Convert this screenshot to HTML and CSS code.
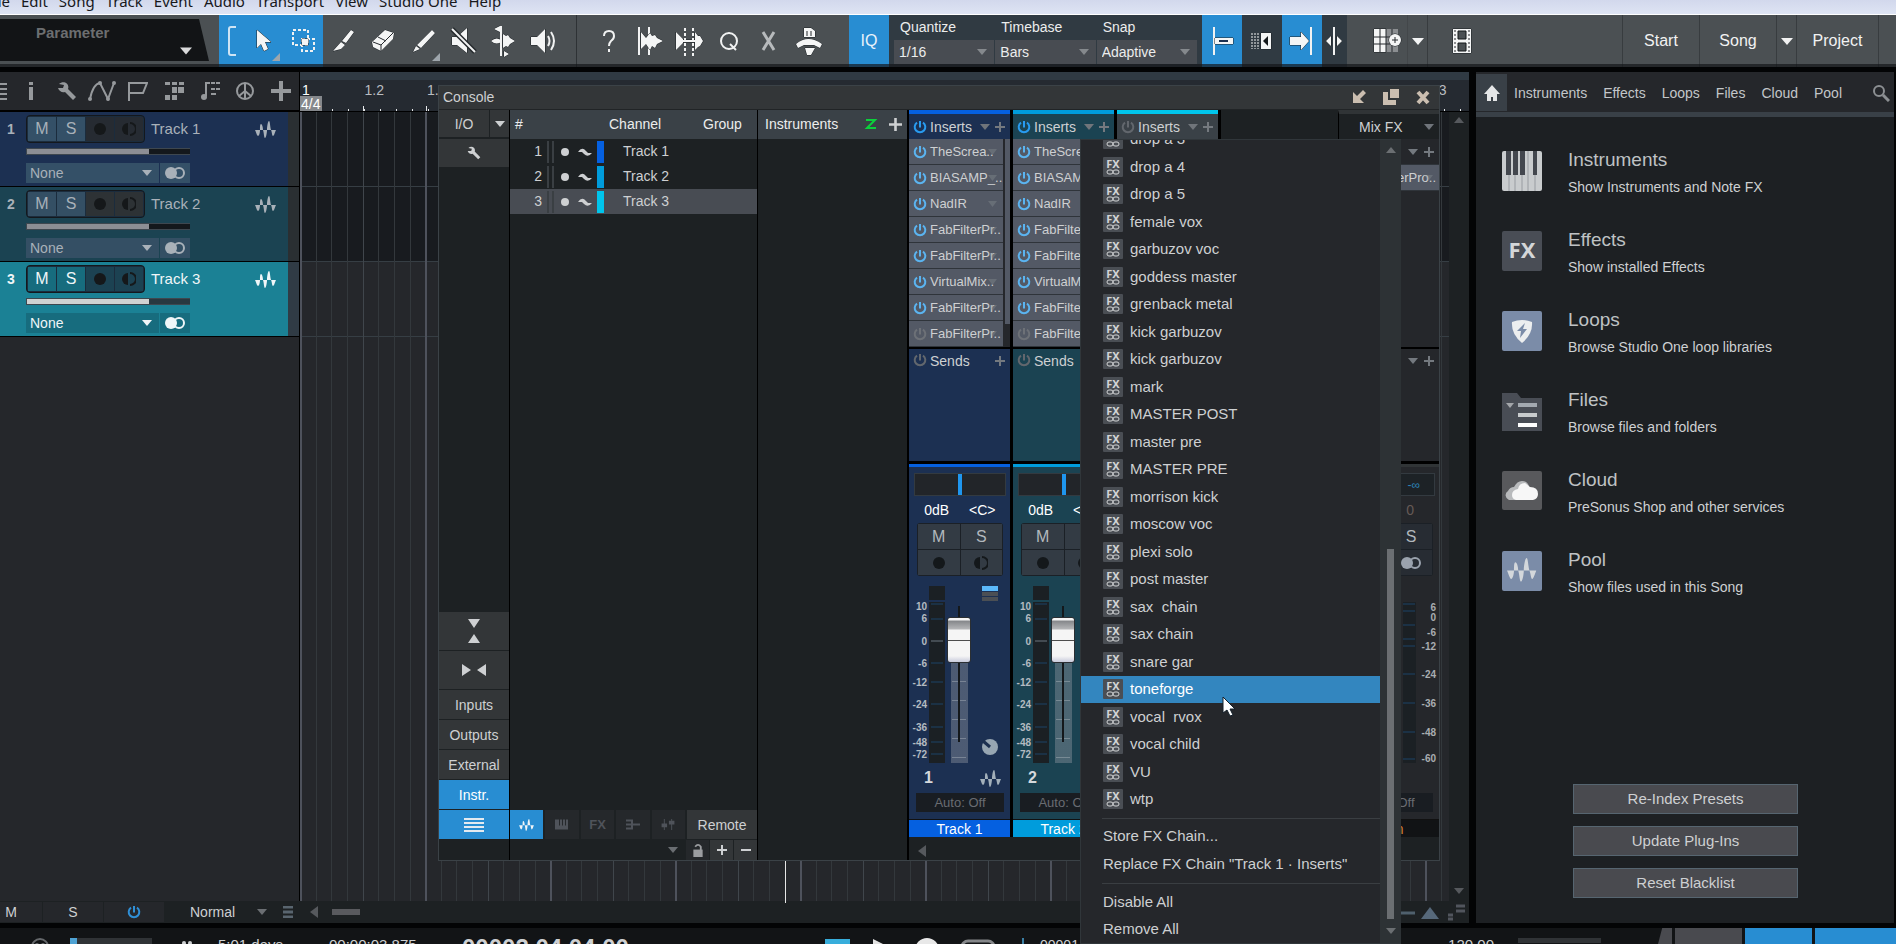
FILE: index.html
```html
<!DOCTYPE html>
<html lang="en">
  <head>
    <meta charset="UTF-8" />
    <meta name="viewport" content="width=device-width, initial-scale=1.0" />
    <title>Studio One</title>
    <link rel="stylesheet" href="styles.css">
  </head>
  <body>
    <!-- shared icons -->
    <svg class="sprite" aria-hidden="true">
      <symbol id="power" viewBox="0 0 14 14">
        <path d="M4 2.6a5.3 5.3 0 1 0 6 0M7 1v6.5" fill="none" stroke="currentColor" stroke-width="2" />
      </symbol>
      <symbol id="caret" viewBox="0 0 10 6"><path d="M0 0h10L5 6z" fill="currentColor" /></symbol>
      <symbol id="plus" viewBox="0 0 10 10"><path d="M5 0v10M0 5h10" stroke="currentColor" stroke-width="2" /></symbol>
      <symbol id="wave" viewBox="0 0 21 17">
        <path d="M0 9h21C20 11 19 15 18 15S17 11 16 9C15 5 15 0 14 0S12 5 12 9c0 3-1 8-2 8S9 12 8 9C8 6 7 3 6 3S5 6 5 9c0 3-1 6-2 6S1 11 0 9z" fill="currentColor" />
      </symbol>
      <symbol id="wrench" viewBox="0 0 20 20">
        <path d="M2 3c4-4 11-1 9 5l8 8-3 3-8-8c-3 1-6-1-7-4h5l1-3z" fill="currentColor" />
      </symbol>
      <symbol id="stereo" viewBox="0 0 20 12">
        <circle cx="6" cy="6" r="6" fill="currentColor" />
        <circle cx="14" cy="6" r="5" fill="none" stroke="currentColor" stroke-width="2" />
      </symbol>
      <symbol id="dot" viewBox="0 0 14 14"><circle cx="7" cy="7" r="6" fill="currentColor" /></symbol>
      <symbol id="half" viewBox="0 0 14 14">
        <path d="M6 1a6 6 0 0 0 0 12z" fill="currentColor" />
        <path d="M8 1a6 6 0 0 1 0 12" fill="none" stroke="currentColor" stroke-width="2" />
      </symbol>
      <symbol id="fx" viewBox="0 0 20 20">
        <rect width="20" height="20" rx="1" fill="#4a4e54" />
        <text x="10" y="11" text-anchor="middle" font-size="11" font-weight="bold" font-family="Noto Sans, sans-serif" fill="#d2d4d5">FX</text>
        <rect x="4" y="13" width="6" height="4" rx="2" fill="none" stroke="#d2d4d5" />
        <rect x="10" y="13" width="6" height="4" rx="2" fill="none" stroke="#d2d4d5" />
      </symbol>
      <symbol id="scale" viewBox="0 0 36 177">
        <path d="M20 0h16v14H20zM20 16h16v161H20z" fill="#1b2024" />
        <path d="M22 18h12M22 33h12M22 77h12M22 96h12M22 118h12M22 141h12M22 156h12M22 168h12" stroke="#1d4267" />
        <path d="M22 55h12" stroke="#6d7680" />
        <g fill="#b4bbc1" font-size="10" font-weight="bold" text-anchor="end" font-family="Liberation Sans, sans-serif">
          <text x="18" y="24">10</text><text x="18" y="36">6</text><text x="18" y="59">0</text>
          <text x="18" y="81">-6</text><text x="18" y="100">-12</text><text x="18" y="122">-24</text>
          <text x="18" y="145">-36</text><text x="18" y="160">-48</text><text x="18" y="172">-72</text>
        </g>
      </symbol>
      <symbol id="layers" viewBox="0 0 16 16">
        <path d="M0 0h16v5H0z" fill="#5bb8fa" />
        <path d="M0 6h16v4H0zM0 11h16v4H0z" fill="#4b4f54" />
      </symbol>
      <symbol id="knob" viewBox="0 0 18 18">
        <circle cx="9" cy="9" r="8" fill="#97a6b2" />
        <path d="M2 3l7 6" stroke="#1c3050" stroke-width="3" />
      </symbol>
      <symbol id="marks" viewBox="0 0 60 22">
        <path d="M2 0v22M7 0v22" stroke="#3a3f43" stroke-width="2" />
        <circle cx="19" cy="11" r="4" />
        <path d="M32 11q4-6 8-1l2 2h4q-4 5-8 1l-2-2z" />
      </symbol>
    </svg>

    <nav class="menubar">
      <a href="#">File</a><a href="#">Edit</a><a href="#">Song</a><a href="#">Track</a><a href="#">Event</a><a href="#">Audio</a><a href="#">Transport</a><a href="#">View</a><a href="#">Studio One</a><a href="#">Help</a>
    </nav>

    <header class="toolbar">
      <div class="parameter">Parameter<svg class="caret"><use href="#caret" /></svg></div>
      <div class="tools on">
        <svg class="bracket" viewBox="0 0 10 30"><path d="M9 1H4q-2 0-2 2v24q0 2 2 2h5" /></svg>
        <button aria-label="Arrow tool"><svg viewBox="0 0 30 30"><path d="M9 4v18l4-4 3 7 4-2-3-7h6z" class="fill" /></svg><i></i></button>
        <button aria-label="Range tool"><svg viewBox="0 0 30 30"><path d="M5 4h15v15H5zM14 13h12v12H14z" class="dash" /><path d="M14 13h6v6h-6z" class="fill" /></svg></button>
      </div>
      <div class="tools">
        <button aria-label="Split tool"><svg viewBox="0 0 30 30"><path d="M23 4l3 2-8 11-4-2zM13 16l4 3-4 4-8 2z" class="fill" /></svg></button>
        <button aria-label="Eraser tool"><svg viewBox="0 0 30 30"><path d="M17 4l9 3-1 6-12 12-8-4-1-5z" class="fill" /><path d="M5 16l8 3 12-12M13 19v6M10 11l8 4" class="cut" /></svg></button>
        <button aria-label="Paint tool"><svg viewBox="0 0 30 30"><path d="M24 4l3 3-14 15-4-3zM8 20l4 3-7 3z" class="fill" /></svg><i></i></button>
        <button aria-label="Mute tool"><svg viewBox="0 0 30 30"><path d="M4 11h5l10-9v25L9 19H4z" class="fill" /><path d="M4 3l23 23" class="cut wide" /><path d="M4 3l23 23" class="line" /></svg></button>
        <button aria-label="Bend tool"><svg viewBox="0 0 30 30"><path d="M3 15q6-5 11 0q-5 5-11 0zM15 8l3 2 2-1 2 3 5 3-5 3-2 3-2-1-3 2zM12 0v6l-6-3zM16 25v6l5-3z" class="fill" /><path d="M13 0v30" class="line" /></svg></button>
        <button aria-label="Listen tool"><svg viewBox="0 0 30 30"><path d="M3 11h6l8-8v24l-8-8H3z" class="fill" /><path d="M20 10q3 5 0 10M23 6q6 9 0 18" class="line" /></svg></button>
      </div>
      <div class="tools actions">
        <button aria-label="Help"><svg viewBox="0 0 30 30"><path d="M10 10q0-5 5-5t5 5q0 3-3 5-2 2-2 5M15 23v3" class="line" /></svg></button>
        <button aria-label="Strip silence"><svg viewBox="0 0 30 30"><path d="M5 1v28M15 1v28" class="line" /><path d="M7 6l5 6 4-5 2 3 3-1 2 3 6 3-6 3-2 4-3-2-2 4-4-6-5 5z" class="fill" /></svg></button>
        <button aria-label="Split at grid"><svg viewBox="0 0 30 30"><path d="M2 6l7 7v4l-7 7zM21 6l3 4 2 0 3 5-3 5-2 1-3 3zM9 14h12v2H9z" class="fill" /><path d="M11 2v28M19 2v28" class="dash" /></svg></button>
        <button aria-label="Quantize"><svg viewBox="0 0 30 30"><circle cx="15" cy="15" r="8" class="line" /><path d="M16 18l6 6" class="line" /></svg></button>
        <button aria-label="Crossfade"><svg viewBox="0 0 30 30"><path d="M9 6l11 18M20 6L9 24" class="line dim" /></svg></button>
        <button aria-label="Audio bend"><svg viewBox="0 0 30 30"><path d="M10 2h7l4 3v6H10zM2 18q12-10 26 0l-2 4-6-3H10l-6 3zM11 22h10l-4 7h-4z" class="fill" /><path d="M13 5v5M17 5v5" class="cut" /></svg></button>
      </div>
      <button class="iq">IQ</button>
      <div class="grid-options">
        <label>Quantize<span class="pick"><select><option>1/16</option></select><svg><use href="#caret" /></svg></span></label>
        <label>Timebase<span class="pick"><select><option>Bars</option></select><svg><use href="#caret" /></svg></span></label>
        <label>Snap<span class="pick"><select><option>Adaptive</option></select><svg><use href="#caret" /></svg></span></label>
      </div>
      <button class="mode on" aria-label="Snap to grid"><svg viewBox="0 0 30 30"><path d="M7 1v28" class="line" /><path d="M8 12h18v6H8z" class="fill" /><path d="M12 15h9" stroke="#1c3050" stroke-width="2" /></svg></button>
      <button class="mode" aria-label="Autoscroll"><svg viewBox="0 0 30 30"><path d="M5 7v16M8 7v16M11 7v16" class="dots" /><path d="M14 7h10v16H14z" class="fill" /><path d="M21 10v10l-5-5z" fill="#14181b" /></svg></button>
      <button class="mode on" aria-label="Follow song"><svg viewBox="0 0 30 30"><path d="M3 11h11V6l8 9-8 9v-5H3z" class="fill" /><path d="M24 1v28" class="line" /></svg></button>
      <button class="mode slim" aria-label="Cursor follows"><svg viewBox="0 0 30 30"><path d="M14 1v28" class="line" /><path d="M11 10v10l-5-5zM17 10v10l5-5z" class="fill" /></svg></button>
      <div class="tools end">
        <button class="grid-btn" aria-label="Macro grid"><svg viewBox="0 0 30 30"><path d="M3 3h12v23H3z" class="fill" /><path d="M15 3h12v23H15z" fill="#8b8e91" /><path d="M9 3v23M15 3v23M21 3v23M3 11h24M3 18h24" class="cut" /><circle cx="24" cy="14" r="6" class="fill" /><path d="M24 11v6M21 14h6" class="cut" /></svg></button>
        <button class="drop" aria-label="Grid options"><svg class="caret"><use href="#caret" /></svg></button>
        <button class="film" aria-label="Video"><svg viewBox="0 0 30 30"><path d="M6 3h18v24H6z" class="fill" /><path d="M11 5h8v8h-8zM11 17h8v8h-8z" fill="#4b5053" stroke="#15181a" /><path d="M8 4v22M22 4v22" stroke="#25272b" stroke-dasharray="2 2" /></svg></button>
      </div>
      <nav class="pages">
        <a href="#">Start</a><a href="#">Song</a><a href="#" class="drop" aria-label="Open songs"><svg class="caret"><use href="#caret" /></svg></a><a href="#" class="project">Project</a><span></span>
      </nav>
    </header>

    <main class="workspace">
      <section class="arrange">
        <div class="arrange-main">
          <div class="track-panel">
            <div class="track-tools">
              <button class="cropped" aria-label="Track list"><svg viewBox="0 0 20 20"><path d="M0 3h14M0 8h14M0 13h14M0 18h14" class="mono" /></svg></button>
              <button aria-label="Inspector"><svg viewBox="0 0 20 20"><path d="M8 1h4v3H8zM8 6h4v13H8z" fill="currentColor" /></svg></button>
              <button aria-label="Track settings"><svg><use href="#wrench" /></svg></button>
              <button aria-label="Automation"><svg class="big" viewBox="0 0 28 20"><path d="M2 18Q5 3 12 2l8 16 6-16" class="mono" /><circle cx="2" cy="18" r="2" /><circle cx="12" cy="2" r="2" /><circle cx="20" cy="18" r="2" /><circle cx="26" cy="2" r="2" /></svg></button>
              <button aria-label="Marker track"><svg viewBox="0 0 20 20"><path d="M1 20V2h18l-4 10H1" class="mono" /></svg></button>
              <button aria-label="Arranger track"><svg viewBox="0 0 20 20"><path d="M1 1h5v3H1zM8 1h5v3H8zM15 1h5v3h-5zM8 6h5v6H8zM14 6h6v6h-6zM1 14h5v5H1zM8 14h5v5H8z" fill="currentColor" /></svg></button>
              <button aria-label="Tempo track"><svg viewBox="0 0 20 20"><path d="M6 1v14M6 2h4M11 2h4M16 2h4M11 8h4M16 8h4M11 13h5" class="mono" /><circle cx="4" cy="16" r="3" /></svg></button>
              <button aria-label="Chord track"><svg viewBox="0 0 20 20"><circle cx="10" cy="10" r="8" fill="none" stroke="currentColor" stroke-width="2" /><path d="M10 2v16M10 10l-6 5M10 10l6 5" class="mono" /></svg></button>
              <button aria-label="Add track"><svg><use href="#plus" /></svg></button>
            </div>

            <article class="track blue">
              <b>1</b>
              <div class="controls">
                <div class="row"><div class="keys"><button>M</button><button>S</button><button class="dark" aria-label="Record"><svg><use href="#dot" /></svg></button><button class="dark" aria-label="Monitor"><svg><use href="#half" /></svg></button></div><h3>Track 1</h3></div>
                <input type="range" class="level" value="75" aria-label="Track 1 volume">
                <div class="input"><span class="pick"><select aria-label="Track 1 input"><option>None</option></select><svg><use href="#caret" /></svg></span><button aria-label="Stereo"><svg><use href="#stereo" /></svg></button></div>
              </div>
              <svg class="wave"><use href="#wave" /></svg>
            </article>
            <article class="track teal">
              <b>2</b>
              <div class="controls">
                <div class="row"><div class="keys"><button>M</button><button>S</button><button class="dark" aria-label="Record"><svg><use href="#dot" /></svg></button><button class="dark" aria-label="Monitor"><svg><use href="#half" /></svg></button></div><h3>Track 2</h3></div>
                <input type="range" class="level" value="75" aria-label="Track 2 volume">
                <div class="input"><span class="pick"><select aria-label="Track 2 input"><option>None</option></select><svg><use href="#caret" /></svg></span><button aria-label="Stereo"><svg><use href="#stereo" /></svg></button></div>
              </div>
              <svg class="wave"><use href="#wave" /></svg>
            </article>
            <article class="track selected">
              <b>3</b>
              <div class="controls">
                <div class="row"><div class="keys"><button>M</button><button>S</button><button class="dark" aria-label="Record"><svg><use href="#dot" /></svg></button><button class="dark" aria-label="Monitor"><svg><use href="#half" /></svg></button></div><h3>Track 3</h3></div>
                <input type="range" class="level" value="75" aria-label="Track 3 volume">
                <div class="input"><span class="pick"><select aria-label="Track 3 input"><option>None</option></select><svg><use href="#caret" /></svg></span><button aria-label="Stereo"><svg><use href="#stereo" /></svg></button></div>
              </div>
              <svg class="wave"><use href="#wave" /></svg>
            </article>
          </div>

          <div class="timeline">
            <div class="ruler">
              <div><span class="first">1<em>4/4</em></span><span>1.2</span><span>1.3</span><span>1.4</span></div>
              <div><span>2</span><span>2.2</span><span>2.3</span><span>2.4</span></div>
              <div><span>3</span><span>3.2</span><span>3.3</span><span>3.4</span></div>
              <div><span>4</span><span>4.2</span><span>4.3</span><span>4.4</span></div>
              <div><span>5</span><span>5.2</span><span>5.3</span></div>
            </div>
            <div class="lanes-wrap">
              <div class="lanes"><div></div><div></div><div class="active"></div><i class="playhead"></i></div>
              <div class="vscroll"><svg class="caret up"><use href="#caret" /></svg><svg class="caret"><use href="#caret" /></svg></div>
            </div>
          </div>
        </div>

        <footer class="arrange-footer">
          <button class="m">M</button><button class="s">S</button><button class="p" aria-label="Power"><svg><use href="#power" /></svg></button>
          <span class="pick"><select aria-label="Track size"><option>Normal</option></select><svg><use href="#caret" /></svg></span>
          <svg class="stack" viewBox="0 0 10 12"><path d="M0 1h10M0 6h10M0 11h10" stroke="#59656f" stroke-width="3" /></svg>
          <svg class="left" viewBox="0 0 8 12"><path d="M8 0v12L0 6z" fill="#56595d" /></svg>
          <i class="thumb"></i>
          <svg class="zoomer" viewBox="0 0 68 20"><path d="M0 11h14" stroke="#4f606d" stroke-width="3" /><path d="M20 17h18l-9-12z" fill="#56687a" /><path d="M47 13h5M47 17h5M55 4h9M55 9h9" stroke="#51555d" stroke-width="3" /></svg>
        </footer>
      </section>

      <aside class="browser">
        <nav class="tabs">
          <a href="#" class="home" aria-label="Home"><svg viewBox="0 0 16 16"><path d="M8 0l8 9h-3v7H9v-4H7v4H3V9H0z" fill="#e4e6e7" /></svg></a>
          <a href="#">Instruments</a><a href="#">Effects</a><a href="#">Loops</a><a href="#">Files</a><a href="#">Cloud</a><a href="#">Pool</a>
          <button aria-label="Search"><svg viewBox="0 0 18 18"><circle cx="7" cy="7" r="5" fill="none" stroke="#8c8f92" stroke-width="2" /><path d="M11 11l6 6" stroke="#8c8f92" stroke-width="3" /></svg></button>
        </nav>
        <ul class="places">
          <li><svg viewBox="0 0 40 40"><rect width="40" height="40" rx="2" fill="#c9ccce" /><path d="M7 24v16M13 24v16M20 24v16M26 0v40M33 24v16" stroke="#989ca1" /><path d="M4 0h5v24H4zM11 0h5v24h-5zM18 0h5v24h-5zM31 0h4v24h-4z" fill="#43474e" /></svg><div><h2>Instruments</h2><p>Show Instruments and Note FX</p></div></li>
          <li><svg viewBox="0 0 40 40"><rect width="40" height="40" rx="2" fill="#494d55" /><text x="20" y="27" text-anchor="middle" font-size="22" font-weight="bold" font-family="Noto Sans, sans-serif" fill="#d4d6d8">FX</text></svg><div><h2>Effects</h2><p>Show installed Effects</p></div></li>
          <li><svg viewBox="0 0 40 40"><rect width="40" height="40" rx="2" fill="#7b8ca8" /><path d="M10 11q10-4 20 0 1 12-10 21Q9 23 10 11z" fill="#eceeef" /><path d="M23 12l-8 8h4l-1 7 7-9h-4z" fill="#7b8ca8" /></svg><div><h2>Loops</h2><p>Browse Studio One loop libraries</p></div></li>
          <li><svg viewBox="0 0 40 40"><path d="M0 2h15l4 5h21v33H0z" fill="#494d55" /><path d="M4 12h8l-4 5z" fill="#a3a6aa" /><path d="M16 14h19" stroke="#a3a9b0" stroke-width="4" /><path d="M16 24h19" stroke="#c8cbcd" stroke-width="4" /><path d="M16 34h19" stroke="#fff" stroke-width="4" /></svg><div><h2>Files</h2><p>Browse files and folders</p></div></li>
          <li><svg viewBox="0 0 40 40"><rect width="40" height="39" rx="2" fill="#58595c" /><path d="M7 29a5 5 0 0 1-1-9q2-4 6-4 3-6 8-6t7 5l-2 14z" fill="#b8babc" /><path d="M14 29q-4-1-4-5 0-5 6-6 1-6 7-6l5 4q8 0 8 7 0 5-5 6z" fill="#f7f7f7" /></svg><div><h2>Cloud</h2><p>PreSonus Shop and other services</p></div></li>
          <li><svg viewBox="0 0 40 40"><rect width="40" height="40" rx="2" fill="#7b8ca8" /><g transform="translate(5 7) scale(1.4)" color="#d3d7db"><use href="#wave" width="21" height="17" /></g></svg><div><h2>Pool</h2><p>Show files used in this Song</p></div></li>
        </ul>
        <div class="maintenance"><button>Re-Index Presets</button><button>Update Plug-Ins</button><button>Reset Blacklist</button></div>
      </aside>
    </main>

    <footer class="transport">
      <svg class="reel" viewBox="0 0 20 20"><circle cx="10" cy="10" r="8" fill="none" stroke="#65686b" stroke-width="2" /><circle cx="7" cy="8" r="2" fill="#65686b" /><circle cx="13" cy="8" r="2" fill="#65686b" /></svg>
      <i class="cpu"></i>
      <svg class="dots-icon" viewBox="0 0 20 20"><circle cx="2" cy="12" r="2" /><circle cx="7" cy="8" r="2" /><circle cx="13" cy="8" r="2" /><circle cx="18" cy="12" r="2" /></svg>
      <span class="days">5:01 days</span><span class="time">00:00:03.875</span><strong>00002.04.04.00</strong>
      <svg class="play" viewBox="0 0 270 16"><path d="M1 11h25v5H1z" fill="#37addb" /><path d="M49 11l10 5H49z" fill="#e2e2e2" /><circle cx="103" cy="22" r="12" fill="#e8e8e8" /><rect x="138" y="13" width="32" height="16" rx="6" fill="none" stroke="#85878a" stroke-width="3" /><path d="M199 10v6" stroke="#3b7fa4" stroke-width="2" /></svg>
      <span class="locator">00001.01.01.00</span>
      <span class="tempo">120.00</span><i class="beat"></i>
      <div class="views"><span class="slant"></span><span></span><span class="lit"></span><span class="lit"></span></div>
    </footer>

    <section class="console">
      <header>
        <h1>Console</h1>
        <button aria-label="Dock"><svg viewBox="0 0 16 16"><path d="M15 4L9 10l4 4H2V3l4 4 6-6z" /></svg></button>
        <button aria-label="Detach"><svg viewBox="0 0 16 16"><path d="M7 0h9v9H7zM0 3h5v8h8v5H0z" /></svg></button>
        <button aria-label="Close"><svg viewBox="0 0 16 16"><path d="M3 3l10 11M13 3L3 14" stroke="#cbbeb0" stroke-width="4" /></svg></button>
      </header>
      <div class="console-body">
        <div class="side">
          <div class="io"><button>I/O</button><button aria-label="I/O options"><svg class="caret"><use href="#caret" /></svg></button></div>
          <button class="setup" aria-label="Options"><svg><use href="#wrench" /></svg></button>
          <div class="side-bottom">
            <button class="tall" aria-label="Collapse height"><svg viewBox="0 0 24 24"><path d="M6 0h12l-6 9zM6 24h12l-6-9z" fill="#ced0d2" /></svg></button>
            <button class="tall" aria-label="Collapse width"><svg viewBox="0 0 24 24"><path d="M0 6v12l9-6zM24 6v12l-9-6z" fill="#ced0d2" /></svg></button>
            <button>Inputs</button><button>Outputs</button><button>External</button><button class="on">Instr.</button>
            <button class="on" aria-label="List"><svg viewBox="0 0 20 14"><path d="M0 1h20M0 5h20M0 9h20M0 13h20" stroke="#e3eaf0" stroke-width="2" /></svg></button>
          </div>
        </div>

        <div class="channels">
          <table>
            <thead><tr><th class="num">#</th><th class="marks"></th><th>Channel</th><th class="group">Group</th></tr></thead>
            <tbody>
              <tr><td class="num">1</td><td class="marks c1"><svg><use href="#marks" /></svg></td><td>Track 1</td><td></td></tr>
              <tr><td class="num">2</td><td class="marks c2"><svg><use href="#marks" /></svg></td><td>Track 2</td><td></td></tr>
              <tr class="current"><td class="num">3</td><td class="marks c3"><svg><use href="#marks" /></svg></td><td>Track 3</td><td></td></tr>
            </tbody>
          </table>
          <div class="filters">
            <button class="on" aria-label="Audio"><svg class="small-wave"><use href="#wave" /></svg></button>
            <button aria-label="Instruments"><svg viewBox="0 0 14 10"><path d="M0 0v10h13V0h-2v6h-1V0H8v6H7V0H5v6H4V0z" fill="currentColor" /></svg></button>
            <button class="fx">FX</button>
            <button aria-label="Busses"><svg viewBox="0 0 14 10"><path d="M0 1h6v8H0M0 5h14" fill="none" stroke="currentColor" stroke-width="2" /></svg></button>
            <button aria-label="Faders"><svg viewBox="0 0 14 12"><path d="M3 0v12M11 0v12" stroke="currentColor" /><path d="M0 5h6v4H0zM8 2h6v4H8z" fill="currentColor" /></svg></button>
            <button class="remote">Remote</button>
          </div>
          <div class="sizer">
            <svg class="caret"><use href="#caret" /></svg>
            <button class="lock" aria-label="Lock"><svg viewBox="0 0 12 14"><path d="M1 6h10v8H1z" fill="#9b9da0" /><path d="M3 3q3-4 6 0v4" fill="none" stroke="#9b9da0" stroke-width="2" /></svg></button>
            <button aria-label="Wider"><svg><use href="#plus" /></svg></button>
            <button aria-label="Narrower"><svg viewBox="0 0 10 10"><path d="M0 5h10" stroke="currentColor" stroke-width="2" /></svg></button>
          </div>
        </div>

        <div class="instruments"><div>Instruments<svg class="zed" viewBox="0 0 14 12"><path d="M2 2h9L3 10h9" fill="none" stroke="#0bd13b" stroke-width="2" /></svg><svg class="add"><use href="#plus" /></svg></div></div>

        <div class="mixer">
          <div class="strip blue">
            <div class="head"><svg class="power"><use href="#power" /></svg>Inserts<svg class="caret"><use href="#caret" /></svg><svg class="add"><use href="#plus" /></svg></div>
            <ul class="inserts">
              <li><svg class="power"><use href="#power" /></svg>TheScrea..</li><li><svg class="power"><use href="#power" /></svg>BIASAMP_..</li><li><svg class="power"><use href="#power" /></svg>NadIR</li><li><svg class="power"><use href="#power" /></svg>FabFilterPr..</li><li><svg class="power"><use href="#power" /></svg>FabFilterPr..</li><li><svg class="power"><use href="#power" /></svg>VirtualMix..</li><li><svg class="power"><use href="#power" /></svg>FabFilterPr..</li><li class="off"><svg class="power"><use href="#power" /></svg>FabFilterPr..</li>
            </ul>
            <div class="sends"><svg class="power off"><use href="#power" /></svg>Sends<svg class="add"><use href="#plus" /></svg></div>
            <div class="panel">
              <div class="pan"></div>
              <div class="values"><span>0dB</span><span>&lt;C&gt;</span></div>
              <div class="pads"><button>M</button><button>S</button><button aria-label="Record"><svg><use href="#dot" /></svg></button><button aria-label="Monitor"><svg><use href="#half" /></svg></button></div>
              <div class="fader"><svg class="scale"><use href="#scale" /></svg><input type="range" value="90" aria-label="Track 1 fader"><div class="extras"><svg><use href="#layers" /></svg><svg class="knob"><use href="#knob" /></svg></div></div>
              <div class="ident"><b>1</b><svg class="wave"><use href="#wave" /></svg></div>
              <button class="auto">Auto: Off</button>
            </div>
            <div class="name">Track 1</div>
          </div>

          <div class="strip teal">
            <div class="head"><svg class="power"><use href="#power" /></svg>Inserts<svg class="caret"><use href="#caret" /></svg><svg class="add"><use href="#plus" /></svg></div>
            <ul class="inserts">
              <li><svg class="power"><use href="#power" /></svg>TheScrea..</li><li><svg class="power"><use href="#power" /></svg>BIASAMP_..</li><li><svg class="power"><use href="#power" /></svg>NadIR</li><li><svg class="power"><use href="#power" /></svg>FabFilterPr..</li><li><svg class="power"><use href="#power" /></svg>FabFilterPr..</li><li><svg class="power"><use href="#power" /></svg>VirtualMix..</li><li><svg class="power"><use href="#power" /></svg>FabFilterPr..</li><li class="off"><svg class="power"><use href="#power" /></svg>FabFilterPr..</li>
            </ul>
            <div class="sends"><svg class="power off"><use href="#power" /></svg>Sends<svg class="add"><use href="#plus" /></svg></div>
            <div class="panel">
              <div class="pan"></div>
              <div class="values"><span>0dB</span><span>&lt;C&gt;</span></div>
              <div class="pads"><button>M</button><button>S</button><button aria-label="Record"><svg><use href="#dot" /></svg></button><button aria-label="Monitor"><svg><use href="#half" /></svg></button></div>
              <div class="fader"><svg class="scale"><use href="#scale" /></svg><input type="range" value="90" aria-label="Track 2 fader"><div class="extras"><svg><use href="#layers" /></svg><svg class="knob"><use href="#knob" /></svg></div></div>
              <div class="ident"><b>2</b><svg class="wave"><use href="#wave" /></svg></div>
              <button class="auto">Auto: Off</button>
            </div>
            <div class="name">Track 2</div>
          </div>

          <div class="strip cyan">
            <div class="head"><svg class="power off"><use href="#power" /></svg>Inserts<svg class="caret"><use href="#caret" /></svg><svg class="add"><use href="#plus" /></svg></div>
          </div>

          <div class="strip master">
            <div class="head">Mix FX<svg class="caret"><use href="#caret" /></svg></div>
            <ul class="inserts">
              <li class="title"><svg class="caret"><use href="#caret" /></svg><svg class="add"><use href="#plus" /></svg></li>
              <li>FabFilterPro..</li>
            </ul>
            <div class="sends"><svg class="caret"><use href="#caret" /></svg><svg class="add"><use href="#plus" /></svg></div>
            <div class="panel">
              <div class="peak">-∞</div>
              <div class="values"><span></span><span>0</span></div>
              <div class="pads"><button>M</button><button>S</button><button></button><button aria-label="Stereo"><svg class="stereo"><use href="#stereo" /></svg></button></div>
              <svg class="out-scale" viewBox="0 0 40 177">
                <path d="M4 16h13v161H4z" fill="#1b2024" />
                <path d="M4 18h12M4 25h12M4 39h12M4 53h12M4 60h12M4 88h12M4 117h12M4 146h12M4 173h12" stroke="#1d4267" />
                <g fill="#a9adb1" font-size="10" font-weight="bold" text-anchor="end" font-family="Liberation Sans, sans-serif"><text x="37" y="25">6</text><text x="37" y="35">0</text><text x="37" y="50">-6</text><text x="37" y="64">-12</text><text x="37" y="92">-24</text><text x="37" y="121">-36</text><text x="37" y="150">-48</text><text x="37" y="176">-60</text></g>
              </svg>
              <div class="ident"></div>
              <button class="auto">Auto: Off</button>
            </div>
            <div class="name">Main</div>
          </div>
          <svg class="mixer-left" viewBox="0 0 8 12"><path d="M8 0v12L0 6z" /></svg>
        </div>
      </div>
    </section>

    <div class="popup">
      <ul>
        <li><svg><use href="#fx" /></svg>drop a 3</li>
        <li><svg><use href="#fx" /></svg>drop a 4</li>
        <li><svg><use href="#fx" /></svg>drop a 5</li>
        <li><svg><use href="#fx" /></svg>female vox</li>
        <li><svg><use href="#fx" /></svg>garbuzov voc</li>
        <li><svg><use href="#fx" /></svg>goddess master</li>
        <li><svg><use href="#fx" /></svg>grenback metal</li>
        <li><svg><use href="#fx" /></svg>kick garbuzov</li>
        <li><svg><use href="#fx" /></svg>kick garbuzov</li>
        <li><svg><use href="#fx" /></svg>mark</li>
        <li><svg><use href="#fx" /></svg>MASTER POST</li>
        <li><svg><use href="#fx" /></svg>master pre</li>
        <li><svg><use href="#fx" /></svg>MASTER PRE</li>
        <li><svg><use href="#fx" /></svg>morrison kick</li>
        <li><svg><use href="#fx" /></svg>moscow voc</li>
        <li><svg><use href="#fx" /></svg>plexi solo</li>
        <li><svg><use href="#fx" /></svg>post master</li>
        <li><svg><use href="#fx" /></svg>sax  chain</li>
        <li><svg><use href="#fx" /></svg>sax chain</li>
        <li><svg><use href="#fx" /></svg>snare gar</li>
        <li class="hover"><svg><use href="#fx" /></svg>toneforge</li>
        <li><svg><use href="#fx" /></svg>vocal  rvox</li>
        <li><svg><use href="#fx" /></svg>vocal child</li>
        <li><svg><use href="#fx" /></svg>VU</li>
        <li><svg><use href="#fx" /></svg>wtp</li>
        <li class="sep"></li>
        <li>Store FX Chain...</li>
        <li>Replace FX Chain "Track 1 · Inserts"</li>
        <li class="sep"></li>
        <li>Disable All</li>
        <li>Remove All</li>
      </ul>
      <div class="popup-scroll"><svg class="caret up"><use href="#caret" /></svg><i></i><svg class="caret"><use href="#caret" /></svg></div>
    </div>

    <svg class="pointer" viewBox="0 0 14 22"><path d="M1 1v16l4-3 3 6 3-1-3-6h5z" fill="#fff" stroke="#14202b" /></svg>
  </body>
</html>
```

FILE: styles.css
```css
* {
  box-sizing: border-box;
}

body {
  margin: 0;
  height: 100vh;
  overflow: hidden;
  display: flex;
  flex-direction: column;
  position: relative;
  background: #030405;
  color: #ced0d2;
  font: 14px/16px "Liberation Sans", Arial, sans-serif;
}

button,
select {
  border: 0;
  margin: 0;
  padding: 0;
  background: none;
  color: inherit;
  font: inherit;
}

button {
  display: flex;
  align-items: center;
  justify-content: center;
}

a {
  color: inherit;
  text-decoration: none;
}

ul,
h1,
h2,
h3,
p {
  margin: 0;
  padding: 0;
  font: inherit;
  list-style: none;
}

svg {
  display: block;
  flex: none;
  fill: currentColor;
}

.sprite {
  position: absolute;
  width: 0;
  height: 0;
}

.caret {
  width: 10px;
  height: 6px;
}

.up {
  transform: rotate(180deg);
}

.power {
  width: 14px;
  height: 14px;
  color: #289bf0;
}

.power.off,
.off .power {
  color: #62676d;
}

.add {
  width: 10px;
  height: 10px;
  color: #74797f;
}

.wave {
  width: 21px;
  height: 17px;
}

.pick {
  display: flex;
  align-items: center;
}

.pick select {
  appearance: none;
  flex: 1;
  min-width: 0;
  height: 100%;
}

.pick svg {
  width: 10px;
  height: 6px;
  margin-right: 7px;
  color: #85898d;
}

/* Menu bar */
.menubar {
  flex: none;
  height: 15px;
  display: flex;
  gap: 11px;
  overflow: hidden;
  background: linear-gradient(#d2d8ec, #dee4f3);
  border-bottom: 1px solid #fff;
  color: #17181c;
  font: 15px/18px "Noto Sans", sans-serif;
}

.menubar a {
  margin-top: -8px;
  white-space: nowrap;
}

.menubar a:first-child {
  margin-left: -14px;
}

/* Main toolbar */
.toolbar {
  flex: none;
  position: relative;
  height: 52px;
  display: flex;
  background: #4b5053;
}

.toolbar::after {
  content: "";
  position: absolute;
  left: 0;
  right: 0;
  bottom: 0;
  height: 3px;
  background: rgba(20, 22, 26, 0.7);
}

.parameter {
  width: 209px;
  height: 42px;
  margin: 4px 10px 0 0;
  padding: 5px 17px 0 36px;
  display: flex;
  justify-content: space-between;
  background: #121416;
  color: #6c6e70;
  font-weight: bold;
  font-size: 15px;
  line-height: 18px;
  clip-path: polygon(0 0, 199px 0, 209px 100%, 0 100%);
}

.parameter .caret {
  width: 12px;
  height: 8px;
  align-self: flex-end;
  margin-bottom: 6px;
  color: #d9dadb;
}

.tools {
  display: flex;
}

.tools button,
.mode {
  position: relative;
  width: 40px;
  color: #f4f5f5;
}

.tools svg,
.mode svg {
  width: 30px;
  height: 30px;
  overflow: visible;
}

.tools .bracket {
  width: 10px;
  margin: 11px 6px 0 8px;
  fill: none;
  stroke: #cfe4f4;
  stroke-width: 2;
}

.tools i {
  position: absolute;
  right: 3px;
  bottom: 6px;
  width: 8px;
  height: 8px;
  background: #9ea6ac;
  clip-path: polygon(100% 0, 100% 100%, 0 100%);
}

.on {
  background: #288dd2;
}

.tools .fill,
.mode .fill {
  fill: #f4f5f5;
  stroke: #1c2125;
  stroke-width: 1;
  paint-order: stroke;
}

.line {
  fill: none;
  stroke: #f1f2f2;
  stroke-width: 2;
}

.line.dim {
  stroke: #b7babc;
  stroke-width: 3;
}

.dash {
  fill: none;
  stroke: #f1f2f2;
  stroke-width: 2;
  stroke-dasharray: 3 2;
}

.dots {
  stroke: #f1f2f2;
  stroke-width: 1;
  stroke-dasharray: 2 1;
}

.cut {
  fill: none;
  stroke: #25292d;
  stroke-width: 1;
}

.cut.wide {
  stroke-width: 5;
}

.actions {
  margin-left: 13px;
  padding: 0 20px 0 12px;
  border-left: 1px solid #2e3235;
}

.iq {
  width: 40px;
  background: #288dd2;
  color: #e8f2fa;
  font-size: 16px;
}

.grid-options {
  width: 313px;
  display: flex;
  gap: 1px;
  padding: 4px 5px 3px;
  background: #303a42;
  color: #eceded;
}

.grid-options label {
  flex: 1;
  display: flex;
  flex-direction: column;
  justify-content: space-between;
  text-indent: 6px;
}

.grid-options .pick {
  height: 24px;
  padding-left: 5px;
  background: #484c52;
}

.mode {
  background: #303a42;
}

.mode.on {
  background: #288dd2;
}

.mode.slim {
  width: 25px;
}

.tools .grid-btn {
  width: 60px;
  padding-left: 18px;
}

.tools .drop {
  width: 20px;
  border-left: 1px solid #43474a;
}

.toolbar .drop .caret {
  width: 12px;
  height: 9px;
}

.tools .film {
  width: 68px;
  border-left: 1px solid #383c3f;
}

.pages {
  margin-left: auto;
  display: flex;
  color: #f2f2f2;
  font-size: 16px;
}

.pages a,
.pages span {
  width: 77px;
  display: flex;
  align-items: center;
  justify-content: center;
  border-left: 1px solid #383c3f;
}

.pages .drop {
  width: 20px;
}

.pages .project {
  width: 82px;
}

.pages span {
  width: 18px;
}

/* Workspace */
.workspace {
  flex: 1;
  min-height: 0;
  display: flex;
  margin: 5px 2px 5px 0;
}

.arrange {
  flex: 1;
  min-width: 0;
  display: flex;
  flex-direction: column;
  background: #25272b;
}

.arrange-main {
  flex: 1;
  min-height: 0;
  display: flex;
}

.track-panel {
  width: 300px;
  border-right: 1px solid #000;
}

.track-tools {
  height: 40px;
  display: flex;
  border-bottom: 2px solid #000;
  color: #96999c;
}

.track-tools button {
  width: 36px;
}

.track-tools svg {
  width: 20px;
  height: 20px;
}

.track-tools .big {
  width: 28px;
}

.track-tools .cropped {
  width: 13px;
  justify-content: flex-end;
}

.mono {
  fill: none;
  stroke: currentColor;
  stroke-width: 2;
}

.track {
  height: 75px;
  display: flex;
  padding-top: 3px;
  border-bottom: 1px solid #000;
  color: #a9b1b9;
  background: linear-gradient(to left, #2a2f32 11px, #1c3052 11px);
  --key: #345067;
  --key-dark: #262b32;
}

.track.teal {
  background: linear-gradient(to left, #2a2f32 11px, #1b4352 11px);
  --key: #344f64;
  --key-dark: #2d3235;
}

.track.selected {
  background: linear-gradient(to left, #303b45 11px, #1b8195 11px);
  color: #f0f6f8;
  --key: #176c7e;
  --key-dark: #1c4252;
}

.track b {
  width: 26px;
  padding: 6px 0 0 7px;
}

.controls {
  flex: 1;
}

.row {
  display: flex;
  align-items: center;
}

.keys {
  display: flex;
  gap: 1px;
  width: 119px;
  height: 28px;
  padding: 1px;
  border: 1px solid #14181d;
  border-radius: 4px;
  background: #1b2c3d;
  font-size: 16px;
}

.keys button {
  flex: 1;
  background: var(--key);
}

.keys .dark {
  background: var(--key-dark);
  color: #15181a;
}

.keys svg {
  width: 14px;
  height: 14px;
}

.row h3 {
  margin-left: 6px;
  font-size: 15px;
}

.level {
  appearance: none;
  display: block;
  width: 164px;
  height: 7px;
  margin: 5px 0 8px;
  border: 1px solid #3e474f;
  border-right: 0;
  background: linear-gradient(to right, #8c8e94 75%, #14181c 75%);
}

.level::-webkit-slider-thumb {
  appearance: none;
  width: 1px;
  height: 5px;
}

.selected .level {
  background: linear-gradient(to right, #d0d2d2 75%, #283840 75%);
}

.input {
  display: flex;
  gap: 1px;
  height: 20px;
}

.input .pick {
  width: 133px;
  padding-left: 4px;
  background: var(--key);
}

.input .pick svg {
  color: inherit;
}

.input button {
  width: 30px;
  background: var(--key);
}

.input button svg {
  width: 20px;
  height: 12px;
}

.track .wave {
  margin: 6px 23px 0 0;
}

/* Timeline */
.timeline {
  flex: 1;
  min-width: 0;
  display: flex;
  flex-direction: column;
}

.ruler {
  flex: none;
  height: 40px;
  display: flex;
  overflow: hidden;
  border-top: 8px solid #303a43;
  border-bottom: 1px solid #000;
  background: #252a31;
}

.ruler div {
  flex: none;
  width: 250px;
  display: flex;
  background: repeating-linear-gradient(to right, #e4e6e8 0 1px, transparent 1px 16px) bottom / 100% 2px no-repeat,
    repeating-linear-gradient(to right, #e4e6e8 0 1px, transparent 1px 63px) bottom / 100% 5px no-repeat;
}

.ruler span {
  width: 25%;
  padding: 2px 0 0 2px;
  color: #b9bcc0;
}

.ruler .first {
  color: #fff;
}

.ruler em {
  display: block;
  width: 22px;
  margin: -2px 0 0 -2px;
  padding-left: 1px;
  background: #85888c;
  color: #fff;
  font-style: normal;
}

.lanes-wrap {
  flex: 1;
  display: flex;
}

.lanes {
  flex: 1;
  position: relative;
}

.lanes div {
  height: 75px;
  background: #181b1f;
  border-bottom: 1px solid #363e44;
}

.lanes .active {
  background: #25272b;
}

/* beat grid drawn over the lanes */
.lanes::after {
  content: "";
  position: absolute;
  inset: 0;
  background: repeating-linear-gradient(to right, #4e525c 0 2px, transparent 2px 16px, #33383c 16px 17px, transparent 17px 31px, #33383c 31px 32px, transparent 32px 47px, #33383c 47px 48px, transparent 48px 63px, #40464c 63px 64px, transparent 64px 78px, #33383c 78px 79px, transparent 79px 94px, #33383c 94px 95px, transparent 95px 110px, #33383c 110px 111px, transparent 111px 125px);
}

.playhead {
  position: absolute;
  z-index: 1;
  left: 485px;
  top: 0;
  bottom: -2px;
  width: 1px;
  background: #e6e6e6;
}

.vscroll {
  width: 20px;
  display: flex;
  flex-direction: column;
  align-items: center;
  justify-content: space-between;
  padding: 5px 0 7px;
  background: #1d2123;
  color: #56595d;
}

.arrange-footer {
  flex: none;
  height: 22px;
  display: flex;
  align-items: center;
  background: #1d2123;
}

.arrange-footer button {
  height: 20px;
  margin-right: 1px;
  background: #25272b;
}

.arrange-footer .m {
  width: 42px;
  padding-right: 20px;
}

.arrange-footer .s,
.arrange-footer .p {
  width: 60px;
}

.arrange-footer .p svg {
  width: 14px;
  height: 14px;
  color: #2f8fd6;
}

.arrange-footer .pick {
  width: 107px;
  margin-left: 25px;
}

.arrange-footer .pick svg {
  color: #6b6f73;
  margin-right: 30px;
}

.arrange-footer .stack {
  width: 10px;
  height: 12px;
  margin-left: -14px;
}

.arrange-footer .left {
  width: 8px;
  height: 12px;
  margin: 0 14px 0 17px;
}

.thumb {
  width: 28px;
  height: 6px;
  background: #595a5e;
}

.zoomer {
  width: 68px;
  height: 20px;
  margin-left: auto;
}

/* Browser */
.browser {
  width: 418px;
  margin-left: 7px;
  display: flex;
  flex-direction: column;
  background: #1d2023;
}

.tabs {
  display: flex;
  align-items: center;
  gap: 16px;
  height: 45px;
  padding: 1px 4px 0 0;
  border-bottom: 5px solid #394047;
  background: #25272b;
  color: #c3c6c9;
}

.tabs .home {
  width: 31px;
  height: 37px;
  margin-right: -9px;
  display: flex;
  align-items: center;
  justify-content: center;
  background: #394047;
}

.home svg {
  width: 16px;
  height: 16px;
}

.tabs button {
  margin-left: auto;
}

.tabs button svg {
  width: 18px;
  height: 18px;
}

.places {
  flex: 1;
  padding: 34px 26px;
}

.places li {
  display: flex;
  gap: 26px;
  height: 80px;
}

.places svg {
  width: 40px;
  height: 40px;
}

.places h2 {
  color: #bfc2c4;
  font-size: 19px;
  line-height: 18px;
}

.places p {
  margin-top: 10px;
}

.maintenance {
  display: flex;
  flex-direction: column;
  gap: 12px;
  width: 225px;
  margin: 0 auto 25px 97px;
}

.maintenance button {
  height: 30px;
  border: 1px solid #566570;
  background: #494a4f;
  font-size: 15px;
}

/* Transport */
.transport {
  flex: none;
  height: 16px;
  display: flex;
  align-items: flex-start;
  overflow: hidden;
  background: #121416;
  white-space: nowrap;
}

.transport svg {
  width: 20px;
  height: 20px;
}

.transport .reel {
  margin: 9px 20px 0 30px;
}

.cpu {
  width: 82px;
  height: 6px;
  margin-top: 10px;
  background: linear-gradient(to right, #4fa3d4 7px, #303336 7px);
}

.transport .dots-icon {
  margin: 7px 21px 0 25px;
}

.transport span {
  padding-top: 9px;
}

.transport .days {
  width: 111px;
  font-size: 15px;
}

.transport .time {
  width: 133px;
  font-size: 15px;
}

.transport strong {
  width: 362px;
  margin-top: 7px;
  font-size: 24px;
  line-height: 26px;
}

.transport .play {
  width: 270px;
  height: 16px;
  margin-right: -54px;
}

.transport .tempo {
  margin-left: auto;
  font-size: 15px;
}

.beat {
  width: 83px;
  height: 5px;
  margin: 10px 57px 0 24px;
  background: #303336;
}

.views {
  display: flex;
  gap: 3px;
  height: 16px;
}

.views span {
  width: 67px;
  background: #494a4f;
}

.views .slant {
  width: 14px;
  clip-path: polygon(30% 0, 100% 0, 100% 100%, 0 100%);
}

.views .lit {
  background: #288dd2;
}

.views .lit:last-child {
  width: 81px;
}

/* Console window */
.console {
  position: absolute;
  z-index: 2;
  left: 438px;
  right: 456px;
  top: 85px;
  bottom: 83px;
  display: flex;
  flex-direction: column;
  border: 1px solid #3b4247;
  background: #1d2123;
}

.console > header {
  flex: none;
  height: 24px;
  display: flex;
  align-items: center;
  gap: 16px;
  padding: 0 8px 1px 4px;
  background: #333638;
  border-bottom: 1px solid #212426;
}

.console h1 {
  margin-right: auto;
}

.console > header svg {
  width: 16px;
  height: 16px;
  fill: #cbbeb0;
}

.console-body {
  flex: 1;
  min-height: 0;
  display: flex;
}

.side {
  width: 71px;
  display: flex;
  flex-direction: column;
  border-right: 1px solid #000;
}

.side button {
  background: #333638;
}

.io {
  display: flex;
  gap: 1px;
  height: 27px;
  margin-bottom: 2px;
}

.io button:first-child {
  flex: 1;
}

.io button:last-child {
  width: 19px;
}

.setup {
  height: 28px;
}

.setup svg {
  width: 14px;
  height: 14px;
}

.side-bottom {
  margin-top: auto;
  margin-bottom: 21px;
  display: flex;
  flex-direction: column;
  gap: 1px;
}

.side-bottom button {
  height: 29px;
}

.side-bottom .tall {
  height: 38px;
}

.side-bottom .tall svg {
  width: 24px;
  height: 24px;
}

.side-bottom .on {
  background: #288dd2;
  color: #fff;
}

.side-bottom .on svg {
  width: 20px;
  height: 14px;
}

.channels {
  width: 248px;
  display: flex;
  flex-direction: column;
  border-right: 1px solid #000;
}

.channels table {
  width: 100%;
  table-layout: fixed;
  border-collapse: collapse;
}

.channels th {
  height: 29px;
  padding: 0 0 1px;
  background: #3a4147;
  color: #eceded;
  font-weight: normal;
  text-align: left;
}

.channels td {
  height: 25px;
  padding: 0 0 1px 14px;
}

.channels .num {
  width: 34px;
  padding: 0 2px 1px 0;
  text-align: right;
}

.channels th.num {
  padding-left: 5px;
  text-align: left;
}

.channels .marks {
  width: 65px;
  padding: 0;
}

.channels .group {
  width: 54px;
}

.marks svg {
  width: 60px;
  height: 22px;
  margin-left: 2px;
}

.channels td.marks {
  background: linear-gradient(var(--c), var(--c)) 53px 50% / 7px 22px no-repeat;
}

.c1 {
  --c: #0560e0;
}

.c2 {
  --c: #009cdc;
}

.c3 {
  --c: #00c5ec;
}

.current {
  background: #484c53;
}

.filters {
  display: flex;
  gap: 2px;
  height: 29px;
  margin-top: auto;
}

.filters button {
  flex: 1;
  background: #25282b;
  color: #4f535a;
}

.filters svg {
  width: 14px;
  height: 11px;
}

.filters .on {
  background: #288dd2;
  color: #f0f4f7;
}

.filters .small-wave {
  width: 17px;
  height: 12px;
}

.filters .fx {
  font-weight: bold;
  font-size: 13px;
}

.filters .remote {
  flex: none;
  width: 70px;
  background: #333638;
  color: #ced0d2;
}

.sizer {
  display: flex;
  align-items: center;
  gap: 1px;
  height: 20px;
  margin-top: 1px;
}

.sizer .caret {
  margin: 0 7px 0 auto;
  color: #6a6e72;
}

.sizer button {
  width: 23px;
  height: 20px;
  background: #333638;
}

.sizer .lock {
  background: #25282b;
}

.sizer button svg {
  width: 10px;
  height: 10px;
}

.sizer .lock svg {
  width: 12px;
  height: 13px;
}

.instruments {
  width: 151px;
  border-right: 2px solid #000;
}

.instruments div {
  height: 29px;
  display: flex;
  align-items: center;
  padding: 0 5px 1px 7px;
  background: #3a4147;
  color: #eceded;
}

.zed {
  width: 14px;
  height: 12px;
  margin-left: auto;
}

.instruments .add {
  width: 13px;
  height: 13px;
  margin-left: 11px;
  color: #ced0d2;
}

/* Mixer */
.mixer {
  flex: 1;
  min-width: 0;
  display: flex;
  position: relative;
}

.mixer-left {
  position: absolute;
  left: 9px;
  bottom: 3px;
  width: 8px;
  height: 12px;
  color: #56595d;
}

.strip {
  flex: none;
  width: 104px;
  height: 727px;
  display: flex;
  flex-direction: column;
  border-right: 3px solid #000;
  --accent: #0560e0;
  --bg: #1c3052;
}

.strip.teal {
  --accent: #009cdc;
  --bg: #1b4352;
}

.strip.cyan {
  height: 29px;
  --accent: #00c5ec;
  --bg: #3a4147;
}

.strip.master {
  width: 101px;
  margin-left: auto;
  border-right: 0;
  --accent: #303436;
  --bg: #25272b;
}

.head {
  height: 29px;
  display: flex;
  align-items: center;
  padding: 0 5px 0 4px;
  border-top: 4px solid var(--accent);
  background: var(--bg);
}

.head .power,
.sends .power {
  margin-right: 3px;
}

.head .caret {
  margin: 0 5px 0 auto;
  color: #70757b;
}

.master .head {
  padding-left: 20px;
  background: #1d2123;
  border-left: 1px solid #000;
}

.master .head .caret {
  margin-right: 0;
}

.inserts {
  flex: none;
  height: 210px;
  border-bottom: 2px solid #000;
  background: linear-gradient(#535965, #535965) 96px 0 / 5px 185px no-repeat #25272b;
}

.inserts li {
  position: relative;
  height: 26px;
  width: 94px;
  display: flex;
  align-items: center;
  gap: 3px;
  padding: 1px 0 0 4px;
  border-bottom: 1px solid #2f343a;
  background: #535965;
  font-size: 13px;
  white-space: nowrap;
}

/* faint drop-down mark at the end of a slot */
.inserts li::after {
  content: "";
  position: absolute;
  right: 6px;
  top: 10px;
  width: 9px;
  height: 6px;
  background: rgba(140, 148, 152, 0.35);
  clip-path: polygon(0 0, 100% 0, 50% 100%);
}

.inserts .title::after {
  display: none;
}

.inserts .power {
  color: #5bb4f0;
}

.inserts .off .power {
  color: #6d7177;
}

.master .inserts {
  background: #25272b;
}

.master .inserts li {
  width: auto;
  justify-content: flex-end;
  padding-right: 3px;
}

.master .inserts .title,
.master .sends {
  justify-content: flex-end;
  gap: 6px;
  padding-right: 5px;
  background: #25272b;
  color: #74797f;
}

.sends {
  flex: none;
  height: 115px;
  display: flex;
  align-items: flex-start;
  padding: 4px 5px 0 4px;
  border-bottom: 3px solid #000;
  background: var(--bg);
}

.sends .add {
  margin: 3px 0 0 auto;
}

.master .sends .add {
  margin-left: 0;
}

.sends .caret {
  margin-top: 5px;
}

.panel {
  flex: 1;
  padding-top: 6px;
  border-top: 3px solid var(--accent);
  background: var(--bg);
}

.pan,
.peak {
  height: 23px;
  margin: 0 4px 0 5px;
  border: 1px solid #333a40;
  background: linear-gradient(#1f96ee, #1f96ee) center / 4px 100% no-repeat #222529;
}

.peak {
  padding: 3px 14px 0 0;
  background: #1d2226;
  color: #2b81b5;
  font-size: 12px;
  text-align: right;
}

.values {
  display: flex;
  height: 27px;
  align-items: center;
  color: #fff;
}

.values span {
  flex: 1;
  text-align: center;
  padding: 0 8px 0 6px;
}

.values span:first-child {
  padding: 0 0 0 8px;
}

.master .values {
  color: #655a56;
}

.master .values span {
  text-align: right;
  padding-right: 25px;
}

.pads {
  display: grid;
  grid-template-columns: 1fr 1fr;
  grid-auto-rows: 25px;
  gap: 1px;
  height: 53px;
  margin: 0 7px 0 8px;
  padding: 1px;
  border-radius: 3px;
  background: #1b2026;
  color: #b2b8bd;
  font-size: 16px;
}

.pads button {
  background: #333b44;
}

.pads svg {
  width: 14px;
  height: 14px;
  color: #14181b;
}

.pads .stereo {
  width: 20px;
  height: 12px;
  color: #9aa2ad;
}

.master .pads {
  margin-right: 6px;
}

.master .pads button {
  background: #272c33;
}

.fader {
  display: flex;
  height: 177px;
  margin-top: 10px;
}

.scale {
  width: 36px;
  height: 177px;
}

.fader input {
  appearance: none;
  writing-mode: vertical-lr;
  direction: rtl;
  width: 24px;
  height: 157px;
  margin: 20px 0 0 2px;
  background: linear-gradient(#14181b, #14181b) center top / 2px 136px no-repeat,
    repeating-linear-gradient(transparent 0 18px, rgba(200, 205, 210, 0.35) 18px 19px) center bottom / 14px 100px no-repeat,
    linear-gradient(rgba(150, 155, 165, 0.4), rgba(150, 155, 165, 0.4)) center bottom / 17px 100px no-repeat;
}

.fader input::-webkit-slider-thumb {
  appearance: none;
  width: 24px;
  height: 46px;
  border: 1px solid #2b2f33;
  border-radius: 3px;
  background: linear-gradient(#f6f6f6 0 2px, #85878a 3px, #b5b6b8 11px, #f5f5f5 12px 22px, #4d4d4d 22px 23px, #f5f5f5 23px 38px, #c8cbdc 44px);
}

.extras {
  display: flex;
  flex-direction: column;
  justify-content: space-between;
  align-items: center;
  width: 38px;
  padding-bottom: 7px;
}

.extras svg {
  width: 16px;
  height: 16px;
}

.extras .knob {
  width: 18px;
  height: 18px;
}

.ident {
  display: flex;
  align-items: center;
  justify-content: space-between;
  height: 30px;
  padding: 0 9px 0 15px;
  color: #a3b0ba;
}

.ident b {
  color: #d5d9dc;
  font-size: 16px;
}

.auto {
  width: 88px;
  height: 19px;
  margin: 0 0 0 7px;
  background: #191d22;
  color: #696c72;
  font-size: 13px;
}

.out-scale {
  width: 40px;
  height: 177px;
  margin: 10px 0 0 auto;
}

.name {
  height: 18px;
  border-top: 1px solid #111;
  background: var(--accent);
  color: #fff;
  line-height: 18px;
  text-align: center;
}

.master .name {
  background: #111315;
  color: #d07d33;
}

/* FX chain menu */
.popup {
  position: absolute;
  z-index: 3;
  left: 1080px;
  top: 139px;
  bottom: 0;
  width: 321px;
  display: flex;
  overflow: hidden;
  border: 1px solid #30363a;
  border-right: 0;
  background: #25272b;
  font-size: 15px;
  line-height: 18px;
}

.popup ul {
  flex: 1;
  margin-top: -14px;
}

.popup li {
  height: 27px;
  display: flex;
  align-items: center;
  gap: 7px;
  padding: 0 0 1px 22px;
  white-space: pre;
}

.popup li:nth-child(even) {
  height: 28px;
}

.popup li svg {
  width: 20px;
  height: 20px;
}

.popup .hover {
  background: #3386bf;
  color: #fff;
}

.popup li.sep {
  height: 1px;
  margin: 5px 0 4px 21px;
  padding: 0;
  background: #3a3e42;
}

.popup-scroll {
  width: 21px;
  display: flex;
  flex-direction: column;
  align-items: center;
  padding: 7px 0 9px;
  background: #2d3235;
  color: #6b6f72;
}

.popup-scroll i {
  width: 7px;
  height: 370px;
  margin: auto 0 9px;
  background: #6b6f72;
}

.pointer {
  position: absolute;
  z-index: 4;
  left: 1222px;
  top: 696px;
  width: 14px;
  height: 22px;
}
```
